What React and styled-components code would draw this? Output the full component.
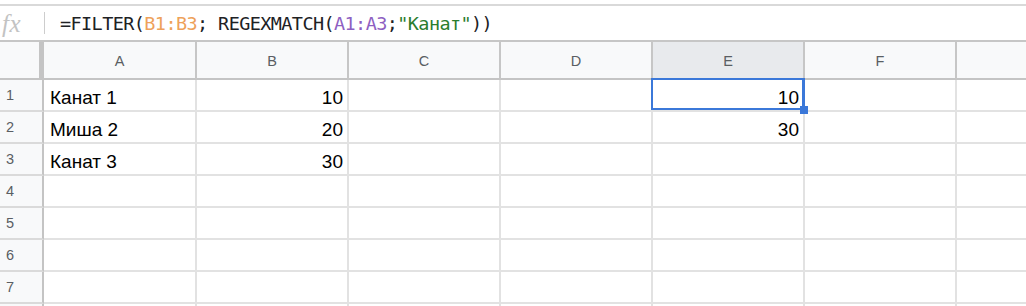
import React from 'react';
import styled, { createGlobalStyle } from 'styled-components';

const GlobalStyle = createGlobalStyle`
  html, body { margin: 0; padding: 0; background: #ffffff; }
  body { font-family: "Liberation Sans", Arial, sans-serif; }
  * { box-sizing: border-box; }
`;

const COLS = '44px 153px repeat(6, 152px)';
const BLUE = '#3b78d9';

const Sheet = styled.div`
  width: 1026px;
  height: 306px;
  overflow: hidden;
  padding-top: 4px;
  background: #fff;
`;

const FormulaBar = styled.div`
  display: flex;
  align-items: center;
  height: 38px;
  border-top: 2px solid #d9d9d9;
  border-bottom: 2px solid #c6c6c6;
`;

const FxLabel = styled.div`
  width: 44px;
  flex-shrink: 0;
  padding-left: 2px;
  font-family: "Liberation Serif", "Times New Roman", serif;
  font-style: italic;
  font-size: 25px;
  line-height: 1;
  color: #c3c3c3;
  letter-spacing: 0.5px;
`;

const Divider = styled.div`
  width: 1px;
  height: 22px;
  flex-shrink: 0;
  background: #cdcdcd;
`;

const FormulaText = styled.div`
  padding-left: 15px;
  font-family: "DejaVu Sans Mono", "Liberation Mono", monospace;
  font-size: 18.5px;
  letter-spacing: -0.6px;
  color: #202124;
  white-space: pre;
`;

const toneColors = {
  orange: '#eea15a',
  purple: '#8e5fc2',
  green: '#2a7d2e',
};

const Token = styled.span`
  color: ${(p) => toneColors[p.$tone] || 'inherit'};
`;

const GridRow = styled.div`
  display: grid;
  grid-template-columns: ${COLS};
  height: ${(p) => (p.$header ? '38px' : '32px')};
`;

const Corner = styled.div`
  background: #f8f9fa;
  border-right: 5px solid #c4c4c4;
  border-bottom: 4px solid #c4c4c4;
  margin-bottom: -2px;
`;

const ColHeader = styled.div`
  display: flex;
  align-items: center;
  justify-content: center;
  padding-top: 2px;
  background: ${(p) => (p.$active ? '#e8eaed' : '#f8f9fa')};
  border-right: 2px solid #c6c6c6;
  border-bottom: 2px solid #c4c4c4;
  font-size: 14.5px;
  color: #5a5e63;
`;

const RowHeader = styled.div`
  display: flex;
  align-items: center;
  padding-left: 6px;
  background: #f8f9fa;
  border-right: 2px solid #c4c4c4;
  border-bottom: 2px solid #dadada;
  font-size: 14.5px;
  color: #5a5e63;
`;

const Cell = styled.div`
  position: relative;
  display: flex;
  align-items: flex-end;
  justify-content: ${(p) => (p.$align === 'right' ? 'flex-end' : 'flex-start')};
  padding: 0 4px 1.5px 6px;
  border-right: 2px solid #e2e2e2;
  border-bottom: 2px solid #e2e2e2;
  font-size: 19px;
  line-height: 22px;
  color: #000;
  white-space: nowrap;
  z-index: ${(p) => (p.$selected ? 2 : 'auto')};
`;

const Selection = styled.div`
  position: absolute;
  top: -2px;
  left: -2px;
  right: -2px;
  bottom: 0;
  border: 2px solid ${BLUE};
  border-right-width: 3px;
  pointer-events: none;
`;

const FillHandle = styled.div`
  position: absolute;
  right: -5px;
  bottom: -4px;
  width: 8px;
  height: 8px;
  background: ${BLUE};
`;

const letters = ['A', 'B', 'C', 'D', 'E', 'F', 'G'];
const visibleLetters = ['A', 'B', 'C', 'D', 'E', 'F'];
const rows = [1, 2, 3, 4, 5, 6, 7, 8];
const visibleRows = [1, 2, 3, 4, 5, 6, 7];

const data = {
  1: { A: 'Канат 1', B: '10', E: '10' },
  2: { A: 'Миша 2', B: '20', E: '30' },
  3: { A: 'Канат 3', B: '30' },
};

const numeric = (v) => /^\d+$/.test(v);

export default function App() {
  return (
    <>
      <GlobalStyle />
      <Sheet>
        <FormulaBar>
          <FxLabel>fx</FxLabel>
          <Divider />
          <FormulaText>
            =FILTER(<Token $tone="orange">B1:B3</Token>; REGEXMATCH(
            <Token $tone="purple">A1:A3</Token>;
            <Token $tone="green">"Канат"</Token>))
          </FormulaText>
        </FormulaBar>
        <GridRow $header>
          <Corner />
          {letters.map((l) => (
            <ColHeader key={l} $active={l === 'E'}>
              {visibleLetters.includes(l) ? l : ''}
            </ColHeader>
          ))}
        </GridRow>
        {rows.map((r) => (
          <GridRow key={r}>
            <RowHeader>{visibleRows.includes(r) ? r : ''}</RowHeader>
            {letters.map((l) => {
              const v = (data[r] && data[r][l]) || '';
              const selected = r === 1 && l === 'E';
              return (
                <Cell
                  key={l}
                  $selected={selected}
                  $align={numeric(v) ? 'right' : 'left'}
                >
                  {v}
                  {selected && (
                    <>
                      <Selection />
                      <FillHandle />
                    </>
                  )}
                </Cell>
              );
            })}
          </GridRow>
        ))}
      </Sheet>
    </>
  );
}
